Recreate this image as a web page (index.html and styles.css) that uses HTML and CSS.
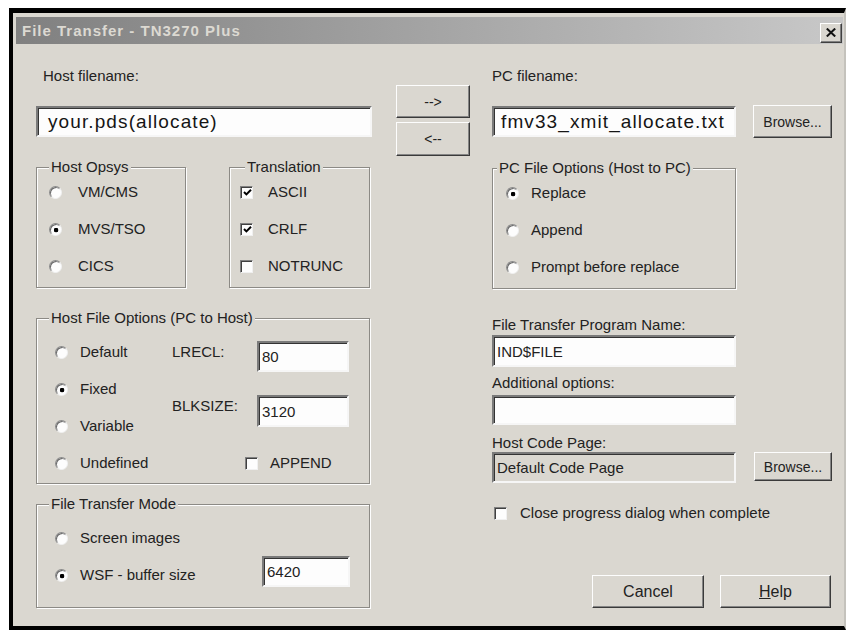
FILE: index.html
```html
<!DOCTYPE html>
<html lang="en">
<head>
<meta charset="utf-8">
<title>File Transfer - TN3270 Plus</title>
<link rel="stylesheet" href="styles.css">
</head>
<body>
<div class="window">
  <div class="titlebar">
    <span class="title">File Transfer - TN3270 Plus</span>
    <span class="close-btn">
      <svg width="10" height="9" viewBox="0 0 10 9"><path d="M0.8 0.6 L9.2 8.4 M9.2 0.6 L0.8 8.4" stroke="#111" stroke-width="2.1" fill="none"/></svg>
    </span>
  </div>

  <div class="content">
    <!-- host side -->
    <div class="col-left">
      <div class="label label-top indent">Host filename:</div>
      <div class="field field-big field-host">your.pds(allocate)</div>

      <div class="group-row">
        <div class="group g-opsys">
          <div class="group-title">Host Opsys</div>
          <div class="opts opts-opsys">
            <div class="opt"><span class="radio"></span>VM/CMS</div>
            <div class="opt"><span class="radio on"></span>MVS/TSO</div>
            <div class="opt"><span class="radio"></span>CICS</div>
          </div>
        </div>
        <div class="group g-trans">
          <div class="group-title">Translation</div>
          <div class="opts opts-trans">
            <div class="opt"><span class="check"><svg width="9" height="9" viewBox="0 0 9 9"><path d="M1 4 L3.4 6.4 L8 1.8" stroke="#000" stroke-width="2" fill="none"/></svg></span>ASCII</div>
            <div class="opt"><span class="check"><svg width="9" height="9" viewBox="0 0 9 9"><path d="M1 4 L3.4 6.4 L8 1.8" stroke="#000" stroke-width="2" fill="none"/></svg></span>CRLF</div>
            <div class="opt"><span class="check"></span>NOTRUNC</div>
          </div>
        </div>
      </div>

      <div class="group g-hfo">
        <div class="group-title">Host File Options (PC to Host)</div>
        <div class="hfo-body">
          <div class="opts opts-hfo">
            <div class="opt"><span class="radio"></span>Default</div>
            <div class="opt"><span class="radio on"></span>Fixed</div>
            <div class="opt"><span class="radio"></span>Variable</div>
            <div class="opt"><span class="radio"></span>Undefined</div>
          </div>
          <div class="hfo-side">
            <div class="hfo-row hfo-lrecl">
              <span class="hfo-label">LRECL:</span>
              <div class="field field-small">80</div>
            </div>
            <div class="hfo-row hfo-blk">
              <span class="hfo-label">BLKSIZE:</span>
              <div class="field field-small field-tall">3120</div>
            </div>
            <div class="opt hfo-append"><span class="check"></span>APPEND</div>
          </div>
        </div>
      </div>

      <div class="group g-mode">
        <div class="group-title">File Transfer Mode</div>
        <div class="opts opts-mode">
          <div class="opt"><span class="radio"></span>Screen images</div>
          <div class="opt"><span class="radio on"></span>WSF - buffer size<div class="field field-small field-wsf">6420</div></div>
        </div>
      </div>
    </div>

    <!-- direction buttons -->
    <div class="col-mid">
      <div class="btn btn-arrow">--&gt;</div>
      <div class="btn btn-arrow btn-arrow2">&lt;--</div>
    </div>

    <!-- PC side -->
    <div class="col-right">
      <div class="label label-top">PC filename:</div>
      <div class="pc-row">
        <div class="field field-big field-pc">fmv33_xmit_allocate.txt</div>
        <div class="btn btn-browse">Browse...</div>
      </div>

      <div class="group g-pcopt">
        <div class="group-title">PC File Options (Host to PC)</div>
        <div class="opts opts-pc">
          <div class="opt"><span class="radio on"></span>Replace</div>
          <div class="opt"><span class="radio"></span>Append</div>
          <div class="opt"><span class="radio"></span>Prompt before replace</div>
        </div>
      </div>

      <div class="label lbl-prog">File Transfer Program Name:</div>
      <div class="field field-prog">IND$FILE</div>
      <div class="label lbl-addl">Additional options:</div>
      <div class="field field-addl"></div>
      <div class="label lbl-cp">Host Code Page:</div>
      <div class="cp-row">
        <div class="field field-cp">Default Code Page</div>
        <div class="btn btn-browse2">Browse...</div>
      </div>

      <div class="opt close-row"><span class="check"></span>Close progress dialog when complete</div>

      <div class="actions">
        <div class="btn btn-action">Cancel</div>
        <div class="btn btn-action btn-help"><span class="u">H</span>elp</div>
      </div>
    </div>
  </div>
</div>
</body>
</html>
```

FILE: styles.css
```css
* {
  box-sizing: border-box;
}

body {
  margin: 8px 0 0 9px;
  background: #ffffff;
  font-family: "Liberation Sans", Arial, sans-serif;
  font-size: 15px;
  color: #222;
}

/* window frame */
.window {
  width: 837px;
  height: 622px;
  border-style: solid;
  border-color: #000 #c4c2bc #000 #000;
  border-width: 5px 2px 4px 4px;
  background: #dad7d0;
  padding: 4px 1px 0 3px;
  display: flex;
  flex-direction: column;
}

.titlebar {
  height: 27px;
  flex: none;
  background: linear-gradient(to right, #808080, #c8c8c8);
  display: flex;
  align-items: center;
  justify-content: space-between;
  padding: 0 1px 0 6px;
}

.title {
  font-weight: bold;
  font-size: 15px;
  letter-spacing: 1px;
  color: #dcd9d2;
}

.close-btn {
  width: 22px;
  height: 20px;
  margin-top: 4px;
  display: flex;
  align-items: center;
  justify-content: center;
  background: #dad7d0;
  border: 1px solid;
  border-color: #fff #404040 #404040 #fff;
  box-shadow: inset -1px -1px 0 #808080;
}

.content {
  flex: 1;
  display: flex;
  padding-left: 20px;
}

/* columns */
.col-left {
  width: 336px;
  display: flex;
  flex-direction: column;
}

.col-mid {
  width: 74px;
  margin-left: 24px;
  padding-top: 41px;
  display: flex;
  flex-direction: column;
}

.col-right {
  width: 340px;
  margin-left: 22px;
  display: flex;
  flex-direction: column;
}

/* text labels */
.label {
  line-height: 18px;
  height: 18px;
  white-space: nowrap;
}

.label-top {
  margin-top: 23px;
}

.indent {
  padding-left: 7px;
}

/* sunken edit fields */
.field {
  background: #fdfdfd;
  border: 2px solid;
  border-color: #7a7a7a #f6f6f6 #f6f6f6 #7a7a7a;
  box-shadow: inset 1px 1px 0 #333;
  height: 31px;
  display: flex;
  align-items: center;
  white-space: nowrap;
  overflow: hidden;
  padding-left: 3px;
  flex: none;
}

.field-big {
  font-size: 19px;
  letter-spacing: 1.1px;
  color: #151515;
}

.field-host {
  margin-top: 21px;
  width: 336px;
  padding-left: 10px;
}

.field-pc {
  width: 244px;
  margin-top: 1px;
  padding-left: 7px;
}

.field-small {
  width: 92px;
}

.field-tall {
  height: 32px;
}

.field-wsf {
  width: 88px;
  margin-left: auto;
  margin-right: 19px;
  align-self: flex-start;
  margin-top: -10px;
}

.field-prog {
  width: 244px;
  height: 32px;
  margin-top: 1px;
}

.field-addl {
  width: 244px;
  height: 30px;
  margin-top: 3px;
}

.field-cp {
  width: 244px;
  background: #dad7d0;
}

/* etched group boxes */
.group {
  border: 1px solid #8c8a85;
  box-shadow: 1px 1px 0 #fdfdfd, inset 1px 1px 0 #fdfdfd;
  flex: none;
}

.group-title {
  margin: -10px 0 0 12px;
  padding: 0 2px;
  width: max-content;
  line-height: 18px;
  height: 18px;
  background: #dad7d0;
  white-space: nowrap;
}

.group-row {
  display: flex;
  gap: 43px;
  margin-top: 30px;
}

.g-opsys {
  width: 150px;
  height: 121px;
}

.g-trans {
  width: 141px;
  height: 121px;
}

.g-trans .group-title {
  margin-left: 15px;
}

.g-hfo {
  width: 334px;
  height: 166px;
  margin-top: 30px;
}

.g-mode {
  width: 334px;
  height: 104px;
  margin-top: 20px;
}

.g-pcopt {
  width: 244px;
  height: 121px;
  margin-top: 30px;
}

.g-pcopt .group-title {
  margin-left: 4px;
}

/* option lists */
.opts {
  display: flex;
  flex-direction: column;
  gap: 19px;
  padding: 7px 0 0 12px;
}

.opt {
  display: flex;
  align-items: center;
  height: 18px;
  line-height: 18px;
  white-space: nowrap;
}

.radio {
  width: 13px;
  height: 13px;
  flex: none;
  border-radius: 50%;
  margin-right: 16px;
  background: #fdfdfd;
  border: 1px solid;
  border-color: #8a8a8a #f0f0f0 #f0f0f0 #8a8a8a;
  box-shadow: inset 1px 1px 0 #6a6a6a;
}

.radio.on {
  background: radial-gradient(circle at 55% 55%, #000 0 2px, #fdfdfd 2.6px);
}

.check {
  width: 13px;
  height: 13px;
  flex: none;
  margin-right: 15px;
  background: #fdfdfd;
  border: 1px solid;
  border-color: #808080 #f0f0f0 #f0f0f0 #808080;
  box-shadow: inset 1px 1px 0 #404040;
  display: flex;
  align-items: center;
  justify-content: center;
}

.check svg {
  display: block;
  margin: 1px 0 0 1px;
}

.opts-trans {
  padding-left: 10px;
}

.opts-pc {
  padding-left: 13px;
}

.opts-pc .radio {
  margin-right: 12px;
}

.opts-hfo {
  width: 135px;
  padding: 16px 0 0 18px;
}

.opts-hfo .radio,
.opts-mode .radio {
  margin-right: 12px;
}

.opts-mode {
  padding: 16px 0 0 18px;
}

/* host file options side block */
.hfo-body {
  display: flex;
}

.hfo-side {
  display: flex;
  flex-direction: column;
}

.hfo-row {
  display: flex;
  align-items: flex-start;
}

.hfo-label {
  width: 85px;
  margin-top: 2px;
  line-height: 18px;
}

.hfo-lrecl {
  margin-top: 14px;
}

.hfo-blk {
  margin-top: 23px;
}

.hfo-append {
  margin: 27px 0 0 73px;
}

.hfo-append .check {
  margin-right: 12px;
}

/* raised push buttons */
.btn {
  background: #dad7d0;
  border: 1px solid;
  border-color: #fdfdfd #3a3a3a #3a3a3a #fdfdfd;
  box-shadow: inset -1px -1px 0 #858585;
  display: flex;
  align-items: center;
  justify-content: center;
  white-space: nowrap;
  flex: none;
}

.btn-arrow {
  height: 33px;
  font-size: 14px;
}

.btn-arrow2 {
  height: 34px;
  margin-top: 4px;
}

.pc-row {
  display: flex;
  align-items: flex-start;
  margin-top: 20px;
}

.btn-browse {
  width: 79px;
  height: 33px;
  margin-left: 17px;
  font-size: 14px;
}

.cp-row {
  display: flex;
  align-items: flex-start;
}

.btn-browse2 {
  width: 78px;
  height: 29px;
  margin-left: 18px;
  font-size: 14px;
}

.lbl-prog {
  margin-top: 27px;
}

.lbl-addl {
  margin-top: 7px;
}

.lbl-cp {
  margin-top: 9px;
}

.close-row {
  margin-top: 21px;
  padding-left: 2px;
}

.close-row .check {
  margin-right: 13px;
}

.actions {
  display: flex;
  justify-content: flex-end;
  gap: 16px;
  padding-right: 1px;
  margin-top: 53px;
}

.btn-action {
  width: 112px;
  height: 33px;
  font-size: 16px;
}

.btn-help {
  width: 111px;
}

.u {
  text-decoration: underline;
}
```
